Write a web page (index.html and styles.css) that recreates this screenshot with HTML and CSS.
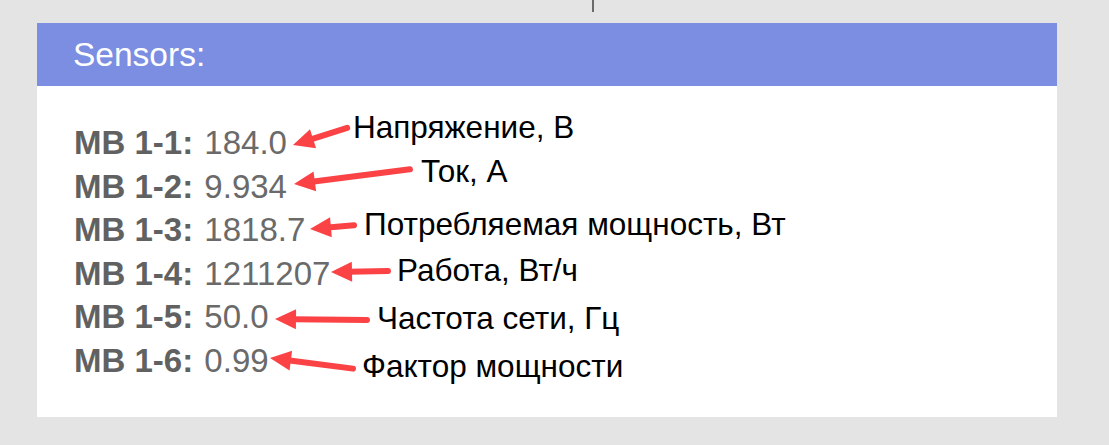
FILE: index.html
```html
<!DOCTYPE html>
<html lang="ru">
<head>
<meta charset="utf-8">
<title>Sensors</title>
<link rel="stylesheet" href="styles.css">
</head>
<body>
<div class="topbar"><span class="tick"></span></div>
<section class="card">
  <header class="card-head">Sensors:</header>
  <div class="card-body">
    <div class="row"><b class="label">MB 1-1:</b> <span class="value">184.0</span></div>
    <div class="row"><b class="label">MB 1-2:</b> <span class="value">9.934</span></div>
    <div class="row"><b class="label">MB 1-3:</b> <span class="value">1818.7</span></div>
    <div class="row"><b class="label">MB 1-4:</b> <span class="value">1211207</span></div>
    <div class="row"><b class="label">MB 1-5:</b> <span class="value">50.0</span></div>
    <div class="row"><b class="label">MB 1-6:</b> <span class="value">0.99</span></div>
  </div>
</section>

<div class="annotations">
  <svg class="arrows" width="1109" height="445" viewBox="0 0 1109 445">
    <g fill="#fb4346" stroke="#fb4346" stroke-width="6" stroke-linecap="round">
      <g transform="translate(293 145) rotate(-17.5)"><polygon stroke="none" points="0,0 21,-10 21,10"/><line x1="18" y1="0" x2="56.8" y2="0"/></g>
      <g transform="translate(294 184) rotate(-7.2)"><polygon stroke="none" points="0,0 21,-10 21,10"/><line x1="18" y1="0" x2="116.9" y2="0"/></g>
      <g transform="translate(310 229) rotate(-4.9)"><polygon stroke="none" points="0,0 21,-10 21,10"/><line x1="18" y1="0" x2="44.2" y2="0"/></g>
      <g transform="translate(331 272) rotate(-1)"><polygon stroke="none" points="0,0 21,-10 21,10"/><line x1="18" y1="0" x2="57" y2="0"/></g>
      <g transform="translate(275 319) rotate(0.6)"><polygon stroke="none" points="0,0 21,-10 21,10"/><line x1="18" y1="0" x2="92" y2="0"/></g>
      <g transform="translate(270 358) rotate(7.3)"><polygon stroke="none" points="0,0 21,-10 21,10"/><line x1="18" y1="0" x2="83.7" y2="0"/></g>
    </g>
  </svg>
  <span class="note n1">Напряжение, В</span>
  <span class="note n2">Ток, А</span>
  <span class="note n3">Потребляемая мощность, Вт</span>
  <span class="note n4">Работа, Вт/ч</span>
  <span class="note n5">Частота сети, Гц</span>
  <span class="note n6">Фактор мощности</span>
</div>
</body>
</html>
```

FILE: styles.css
```css
html, body {
  margin: 0;
  padding: 0;
}
body {
  background: #e4e4e4;
  font-family: "Liberation Sans", Arial, sans-serif;
  width: 1109px;
  height: 445px;
  overflow: hidden;
  position: relative;
}
.topbar {
  height: 23px;
  display: flex;
}
.tick {
  display: block;
  margin-left: 592px;
  width: 2px;
  height: 12px;
  background: #6a6a6a;
}
.card {
  margin-left: 37px;
  width: 1020px;
  background: #ffffff;
}
.card-head {
  height: 63px;
  background: #7b8ee2;
  color: #ffffff;
  font-size: 33.5px;
  padding-left: 36px;
  display: flex;
  align-items: center;
}
.card-body {
  padding: 35px 36px 35px 37px;
  height: 261px;
}
.row {
  font-size: 33px;
  line-height: 43.5px;
  height: 43.5px;
  white-space: nowrap;
}
.label {
  font-weight: bold;
  color: #616161;
}
.value {
  color: #6a6a6a;
  margin-left: 2px;
}
.annotations {
  position: absolute;
  left: 0;
  top: 0;
  width: 1109px;
  height: 445px;
  pointer-events: none;
}
.arrows {
  position: absolute;
  left: 0;
  top: 0;
}
.note {
  position: absolute;
  font-size: 31.5px;
  line-height: 30px;
  color: #000000;
  white-space: nowrap;
}
.n1 { left: 353px; top: 112px; }
.n2 { left: 421px; top: 156px; }
.n3 { left: 364px; top: 209px; }
.n4 { left: 397px; top: 255px; }
.n5 { left: 377px; top: 303px; }
.n6 { left: 362px; top: 351px; }
```
